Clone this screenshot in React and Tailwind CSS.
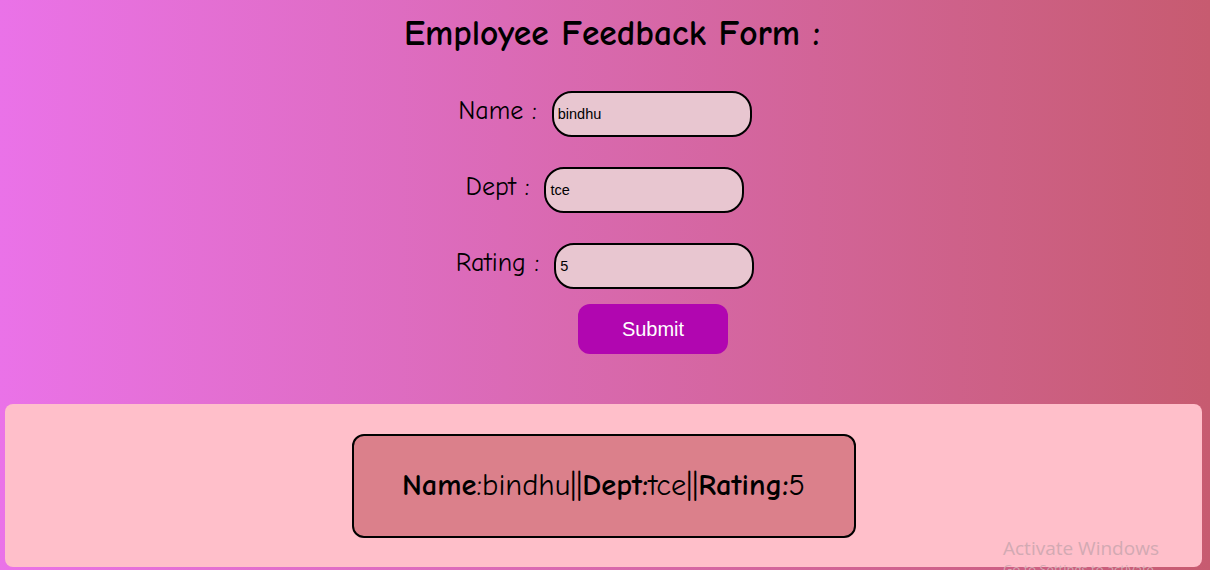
import React, { useState } from "react";

const comic = "font-['Comic_Sans_MS','Comic_Neue','DejaVu_Sans',sans-serif]";

export default function App() {
  const [name, setName] = useState("bindhu");
  const [dept, setDept] = useState("tce");
  const [rating, setRating] = useState("5");

  const inputCls =
    "w-[200px] h-[46px] rounded-[20px] border-2 border-black bg-[#e8c6d0] pl-[4px] text-[14.5px] text-black font-['Liberation_Sans',Arial,sans-serif] outline-none";

  return (
    <div className="relative h-[570px] w-full overflow-hidden bg-gradient-to-r from-[#ea72e8] to-[#c75b70]">
      <div className="flex flex-col items-center">
        <h1 className={`${comic} mt-[14px] ml-[14px] text-[35.5px] leading-[40px] font-bold text-black`}>
          Employee Feedback Form :
        </h1>
        <div className="mt-[37px] flex flex-col items-center gap-[30px]">
          <div className="flex items-center gap-[15px]">
            <label className={`${comic} -mt-[5px] text-[26px] text-black`}>Name :</label>
            <input className={inputCls} value={name} onChange={(e) => setName(e.target.value)} />
          </div>
          <div className="flex items-center gap-[15px]">
            <label className={`${comic} -mt-[5px] text-[26px] text-black`}>Dept :</label>
            <input className={inputCls} value={dept} onChange={(e) => setDept(e.target.value)} />
          </div>
          <div className="flex items-center gap-[15px]">
            <label className={`${comic} -mt-[5px] text-[26px] text-black`}>Rating :</label>
            <input className={inputCls} value={rating} onChange={(e) => setRating(e.target.value)} />
          </div>
        </div>
        <button className="mt-[15px] ml-[96px] h-[50px] w-[150px] rounded-[12px] bg-[#b106b0] text-[20px] leading-[46px] text-white font-['Liberation_Sans',Arial,sans-serif]">
          Submit
        </button>
      </div>
      <div className="ml-[5px] mr-[8px] mt-[50px] flex h-[163px] justify-center rounded-[8px] bg-[#ffbfca] pt-[30px]">
        <div className={`${comic} flex h-[104px] w-[504px] items-center justify-center rounded-[12px] border-2 border-black bg-[#db808b] text-[30.5px] text-black`}>
          <span>
            <b>Name</b>:{name}||<b>Dept:</b>{dept}||<b>Rating:</b>{rating}
          </span>
        </div>
      </div>
      <div className="pointer-events-none absolute left-[1003px] top-[536px] font-['Open_Sans',sans-serif] text-[19px] leading-[24px] text-[#d2aab3]">
        Activate Windows
        <div className="text-[13px] leading-[18px]">Go to Settings to activate Windows.</div>
      </div>
    </div>
  );
}
